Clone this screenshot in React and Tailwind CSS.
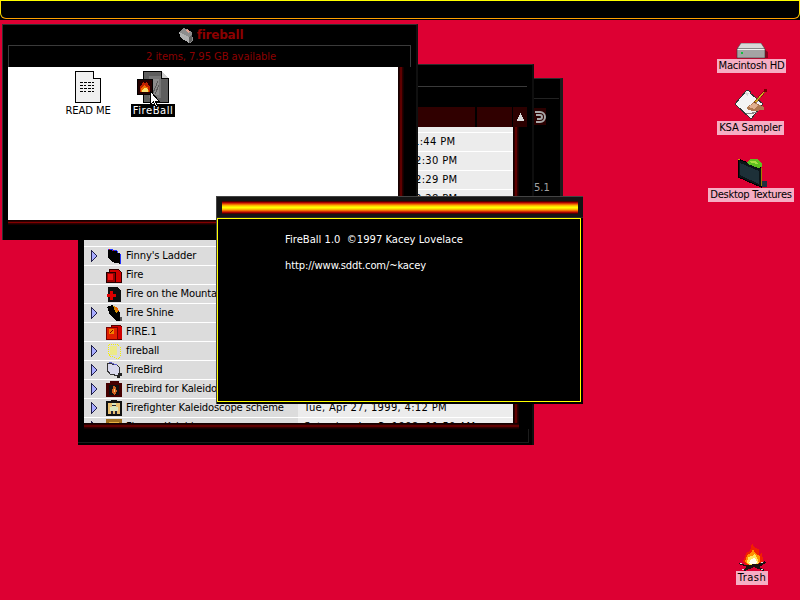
import React from "react";

const FONT = "font-['DejaVu_Sans',sans-serif] text-[10px] leading-[12px] whitespace-nowrap";

function Tri() {
  return (
    <svg width="8" height="14" viewBox="0 0 8 14" shapeRendering="crispEdges">
      <polygon points="1,1 7,7 1,13" fill="#a8acff" stroke="#20204a" strokeWidth="1" />
    </svg>
  );
}

function Ico({ children }) {
  return (
    <svg width="16" height="16" viewBox="0 0 16 16" shapeRendering="crispEdges" className="shrink-0">
      {children}
    </svg>
  );
}

const rowIcons = {
  finny: (
    <Ico>
      <path d="M2 1l9 2 1 2 3 1v10l-9-2-4-5z" fill="#000" />
      <path d="M2 1l9 2 1 2M14 6v10" stroke="#2030ff" fill="none" />
      <path d="M3 1l1 1M7 2l1 1" stroke="#e00000" />
    </Ico>
  ),
  fire: (
    <Ico>
      <path d="M3 2h9l3 3v10H3z" fill="#d00000" stroke="#300" />
      <path d="M0 5h9v10H0z" fill="#900" stroke="#200" />
      <path d="M2 7h5v6H2z" fill="#f01010" />
    </Ico>
  ),
  mountain: (
    <Ico>
      <path d="M2 1h9l4 4v11H2z" fill="#101010" />
      <path d="M4 5h3v3h3v3H7v3H4v-3H1V8h3z" fill="#e00000" />
    </Ico>
  ),
  shine: (
    <Ico>
      <path d="M1 2l5-2 3 2 5 6v8h-3L4 10z" fill="#000" />
      <path d="M7 1h2l3 5-2 2z" fill="#d09000" />
      <path d="M9 2h2l2 4h-2z" fill="#f06000" />
      <path d="M14 12h2v4h-2z" fill="#555" />
    </Ico>
  ),
  fire1: (
    <Ico>
      <path d="M5 1h9l2 2v12H5z" fill="#d00000" stroke="#500" />
      <path d="M0 3h11v12H0z" fill="#e02000" stroke="#700" />
      <path d="M3 5h5v5H3z" fill="#f08000" />
      <path d="M4 9l3-3" stroke="#700" />
    </Ico>
  ),
  fireball: (
    <Ico>
      <path d="M3 1h8l3 3v9l-2 3-8-3-2-5z" fill="none" stroke="#f4f000" strokeDasharray="1 1" strokeWidth="1" />
      <path d="M4 3h7v9H4z" fill="#f4f060" fillOpacity=".65" />
    </Ico>
  ),
  bird: (
    <Ico>
      <path d="M1 1l10 2 2 2v9l-9-2-3-4z" fill="#d8d8ec" stroke="#333" />
      <path d="M3 0l8 3" stroke="#6060d0" />
      <path d="M12 11h4v3h-2v2h-3z" fill="#222" />
    </Ico>
  ),
  kaleid: (
    <Ico>
      <path d="M0 2h4V0h9v2h3v14H0z" fill="#400" />
      <path d="M3 4h10v10H3z" fill="#111" />
      <path d="M7 5h2l2 5-2 4-3-2z" fill="#d06020" />
      <path d="M8 8h1v3H8z" fill="#f0d070" />
    </Ico>
  ),
  fighter: (
    <Ico>
      <path d="M0 1h5V0h6v1h5v15H0z" fill="#111" />
      <path d="M2 3h12v11H2z" fill="#e8c070" />
      <path d="M6 3h4v4H6zM4 7h8v4H4z" fill="#d8e8c0" />
      <path d="M5 11h2v3H5zM9 11h2v3H9zM6 5h4v1H6z" fill="#223" />
    </Ico>
  ),
  flame: (
    <Ico>
      <path d="M0 0h16v16H0z" fill="#a07020" />
      <path d="M3 3h10v10H3z" fill="#e8b040" />
    </Ico>
  ),
};

const timeRows = [
  [115, "1:44 PM"],
  [117, "2:30 PM"],
  [117, "2:29 PM"],
  [117, "2:28 PM"],
];

const nameRows = [
  { tri: true, icon: "finny", name: "Finny's Ladder" },
  { icon: "fire", name: "Fire" },
  { icon: "mountain", name: "Fire on the Mountain" },
  { tri: true, icon: "shine", name: "Fire Shine" },
  { icon: "fire1", name: "FIRE.1" },
  { tri: true, icon: "fireball", name: "fireball" },
  { tri: true, icon: "bird", name: "FireBird" },
  { tri: true, icon: "kaleid", name: "Firebird for Kaleidoscope" },
  { tri: true, icon: "fighter", name: "Firefighter Kaleidoscope scheme", date: "Tue, Apr 27, 1999, 4:12 PM" },
  { tri: true, icon: "flame", name: "Flames Kaleidoscope", date: "Saturday, Jan 3, 1998, 11:50 AM" },
];

function Row({ tri, icon, name, date, dateOffset = 6 }) {
  return (
    <div className="flex h-[19px] border-t border-white text-black">
      <div className="flex w-[214px] shrink-0 items-center overflow-hidden bg-[#dcdcdc]">
        <div className="flex w-[22px] shrink-0 justify-start pl-[6px]">{tri ? <Tri /> : null}</div>
        {icon ? rowIcons[icon] : null}
        <span className="ml-1 tracking-[-0.15px]">{name}</span>
      </div>
      <div className="flex flex-1 items-center overflow-hidden bg-[#ececec]">
        <span className="tracking-[0.3px]" style={{ marginLeft: dateOffset }}>{date}</span>
      </div>
    </div>
  );
}

function GenericFolder({ size = 16 }) {
  return (
    <svg width={size} height={size} viewBox="0 0 16 16" shapeRendering="crispEdges">
      <path d="M1 5l5-4 8 4 1 9-3 2-9-5z" fill="#8c8c8c" />
      <path d="M1 5l10 5v6l-8-5z" fill="#b0b0b0" />
      <path d="M9 2l3 2-1 2-3-2z" fill="#e0a090" />
      <path d="M11 10l3-3v7l-3 2z" fill="#606060" />
    </svg>
  );
}

function MiniFlame() {
  return (
    <svg width="16" height="16" viewBox="0 0 16 16" shapeRendering="crispEdges">
      <rect width="16" height="16" fill="#000" />
      <rect x="1" y="1" width="14" height="14" fill="#240000" />
      <path d="M3 13V7l2-1 1-3 2 2 2-3 1 4 2 1v6z" fill="#c02000" />
      <path d="M4 13V9l2-1 2-3 1 3 2 0 1 5z" fill="#f07000" />
      <path d="M5 13v-2l2-2 2 0 2 2v2z" fill="#f8e070" />
    </svg>
  );
}

function ReadMeIcon() {
  return (
    <svg width="26" height="32" viewBox="0 0 26 32" shapeRendering="crispEdges">
      <path d="M.5.5h18l7 7v24H.5z" fill="#f0f0f0" stroke="#000" />
      <path d="M18.5.5v7h7" fill="#fff" stroke="#000" />
      <path d="M5 11h14M5 14h6M13 14h6M5 17h14M5 20h6M13 20h6" stroke="#000" strokeDasharray="3 1" />
    </svg>
  );
}

function FireBallDoc() {
  return (
    <svg width="26" height="32" viewBox="0 0 26 32" shapeRendering="crispEdges">
      <path d="M.5.5h18l7 7v24H.5z" fill="#5e5e5e" stroke="#000" />
      <path d="M18.5.5v7h7" fill="#cfcfcf" stroke="#000" />
      <path d="M6 5h12v22H6z" fill="#767676" />
      <path d="M9 8h7v16H9z" fill="#8c8c8c" />
      <path d="M10 22l5-12M12 23l4-9" stroke="#5a5a5a" />
    </svg>
  );
}

function Cursor() {
  return (
    <svg width="11" height="17" viewBox="0 0 11 17" shapeRendering="crispEdges">
      <path d="M.5.5v13l3-3 2 5h2l-2-5h4z" fill="#fff" stroke="#000" />
    </svg>
  );
}

function HdIcon() {
  return (
    <svg width="32" height="16" viewBox="0 0 32 16">
      <path d="M28 6l4 3v6h-5z" fill="#8a001c" />
      <path d="M5 0h20l4 6H1z" fill="#d8d8d8" stroke="#444" strokeWidth=".6" />
      <path d="M1 6h28v9H1z" fill="#a4a4a4" stroke="#333" strokeWidth=".6" />
      <path d="M1.5 6.5h27" stroke="#f0f0f0" />
      <rect x="5" y="9" width="2" height="2" fill="#10c040" />
    </svg>
  );
}

function KsaIcon() {
  return (
    <svg width="33" height="32" viewBox="0 0 33 32" shapeRendering="crispEdges">
      <path d="M1 15L13 1l4 2-1 1 13 11-12 15z" fill="#f4f4f4" stroke="#333" />
      <path d="M11 3l4 1-1 3-3-2z" fill="#d8d8d8" />
      <path d="M12 19l8-6 6 3 4 2v3l-10 1-6-1z" fill="#b07850" />
      <path d="M14 18l6-4 4 2-4 4z" fill="#e0b090" />
      <path d="M20 13l8-9 3-3 1 1-10 12z" fill="#d8b020" stroke="#400" strokeWidth=".5" />
      <path d="M30 0h3v3h-3z" fill="#700" />
      <path d="M6 19l6 5 12-1-5 2H12z" fill="#888" />
    </svg>
  );
}

function TexturesIcon() {
  return (
    <svg width="30" height="32" viewBox="0 0 30 32" shapeRendering="crispEdges">
      <path d="M24 25h6v6h-5z" fill="#223040" />
      <path d="M1 3l23 9v19L1 21z" fill="#0c1418" stroke="#000" />
      <path d="M3 7l19 8v13L3 19z" fill="#1d3038" />
      <path d="M10 6l4-3h6l5 4v4l-4 1-10-4z" fill="#60c020" />
      <path d="M13 5h5l3 3-7-1z" fill="#a8e040" />
      <path d="M24 12v18" stroke="#a08000" />
      <path d="M1 3h2" stroke="#d0a000" />
    </svg>
  );
}

function TrashIcon() {
  return (
    <svg width="30" height="28" viewBox="0 0 30 28" shapeRendering="crispEdges">
      <path d="M6 18L10 9l3-1 2-8 3 5 4 1v6l3-3 1 9-4 4H9z" fill="#f02000" />
      <path d="M8 19l2-7 4-2 2-4 3 5 2 1 2 1 0 6-4 2H10z" fill="#ff9000" />
      <path d="M10 20l1-6 4-1 3-2 2 4 2 5-3 2h-7z" fill="#ffe860" />
      <path d="M12 20l2-4 4-1 2 4-2 2h-4z" fill="#fffff0" />
      <path d="M2 20l7 2 12-1 7-3 1 2-7 4 6 3-2 1-9-4-9 4-2-1 4-3-8-3z" fill="#1c1010" />
      <path d="M3 20h2M24 19h2M5 26h2M24 26h2" stroke="#e0e0e0" />
    </svg>
  );
}

function DesktopIcon({ pos, label, children, iconClass, track }) {
  return (
    <div className={`absolute flex flex-col items-center ${pos}`}>
      <div className={`flex justify-center ${iconClass}`}>{children}</div>
      <div className={`h-[14px] w-full bg-[#f6aec4] text-center leading-[14px] text-black ${track}`}>{label}</div>
    </div>
  );
}

const channelX = "bg-[linear-gradient(90deg,#0a0000,#300000_30%,#800000_50%,#300000_70%,#0a0000)]";
const channelY = "bg-[linear-gradient(#0a0000,#300000_30%,#800000_50%,#300000_70%,#0a0000)]";

export default function App() {
  return (
    <div className={`relative h-[600px] w-[800px] overflow-hidden bg-[#dd0033] ${FONT}`}>
      {/* menu bar */}
      <div className="h-[20px] bg-black">
        <div className="h-[19px] rounded-b-[6px] border-x border-t border-b border-x-[#ffe000] border-t-[#ffff00] border-b-[#ffa000] bg-black" />
      </div>

      {/* back window */}
      <div className="absolute left-[480px] top-[78px] flex h-[260px] w-[83px] flex-col border-t border-r-[3px] border-t-[#2c2c2c] border-r-[#1c1c1c] bg-black text-[#a0a0a0]">
        <div className="mt-[19px] mr-[1px] h-px bg-[#222222]" />
        <div className="mt-[9px] ml-[54px] flex h-[17px] w-[12px] items-center justify-center bg-[#2a0000]">
          <svg width="12" height="14" viewBox="0 0 12 14">
            <path d="M1 2h5a5 5 0 0 1 0 10H2M2 5h4a2 2 0 0 1 0 4H3" fill="none" stroke="#a8a8a8" strokeWidth="2" />
          </svg>
        </div>
        <div className="mt-[57px] ml-[54px]">5.1</div>
      </div>

      {/* list window */}
      <div className="absolute left-[78px] top-[64px] flex h-[381px] w-[456px] flex-col border-t border-r-2 border-t-[#2c2c2c] border-r-[#0e0e0e] bg-black">
        <div className="h-[21px] shrink-0" />
        <div className="ml-[6px] mr-[5px] h-[21px] shrink-0 border-t border-l border-[#3a3a3a]" />
        <div className="ml-[6px] mr-[5px] flex h-[20px] shrink-0 gap-px">
          <div className="flex flex-1 gap-[2px] bg-black">
            <div className="flex-1 bg-[#300000]" />
            <div className="w-[35px] bg-[#300000]" />
          </div>
          <div className="flex w-[14px] items-center justify-center bg-[#2c0000]">
            <svg width="9" height="8" viewBox="0 0 9 8" shapeRendering="crispEdges">
              <path d="M4 0h1v2H4zM3 2h3v2H3zM2 4h5v2H2zM1 6h7v2H1z" fill="#d8d8d8" />
            </svg>
          </div>
        </div>
        <div className="ml-[6px] flex h-[296px] shrink-0">
          <div className="w-[429px] overflow-hidden bg-[#ececec]">
            <div className="h-[5px] bg-[#ececec]" />
            {timeRows.map(([off, t]) => (
              <Row key={t} date={t} dateOffset={off} />
            ))}
            <Row />
            <Row />
            {nameRows.map((r) => (
              <Row key={r.name} {...r} />
            ))}
          </div>
          <div className={`w-[6px] ${channelX}`} />
        </div>
        <div className={`ml-[6px] h-[6px] w-[435px] shrink-0 ${channelY}`} />
        <div className="mb-[2px] mr-[3px] flex-1 border-r border-b border-[#1c1c1c]" />
      </div>

      {/* fireball window */}
      <div className="absolute left-[2px] top-[24px] flex h-[216px] w-[416px] flex-col border-t border-l border-r-2 border-t-[#303030] border-l-[#303030] border-r-[#101010] bg-black">
        <div className="flex h-[20px] shrink-0 items-center justify-center gap-[3px] pl-[2px] font-bold text-[#8c0000]">
          <GenericFolder />
          <span className="text-[12px] leading-[14px] tracking-[-0.2px]">fireball</span>
        </div>
        <div className="ml-[5px] mr-[5px] flex h-[22px] shrink-0 items-center justify-center border-t border-l border-r border-[#3a3a3a] pl-[3px] tracking-[-0.08px] text-[#8c0000]">
          2 items, 7.95 GB available
        </div>
        <div className="ml-[5px] flex h-[153px] shrink-0">
          <div className="relative w-[390px] bg-white text-black">
            <div className="absolute left-[58px] top-[4px] flex w-[44px] flex-col items-center">
              <ReadMeIcon />
              <span className="mt-[1px] leading-[14px] tracking-[-0.1px]">READ ME</span>
            </div>
            <div className="absolute left-[123px] top-[4px] flex w-[44px] flex-col items-center">
              <div className="pl-[5px]">
                <FireBallDoc />
              </div>
              <span className="mt-[1px] h-[13px] w-full bg-black text-center leading-[13px] tracking-[0.5px] text-white">FireBall</span>
            </div>
            <div className="absolute left-[129px] top-[12px]">
              <MiniFlame />
            </div>
            <div className="absolute left-[142px] top-[24px]">
              <Cursor />
            </div>
          </div>
          <div className={`w-[6px] ${channelX}`} />
        </div>
        <div className={`ml-[5px] h-[5px] w-[396px] shrink-0 ${channelY}`} />
      </div>

      {/* about window */}
      <div className="absolute left-[216px] top-[196px] flex h-[208px] w-[367px] flex-col border-t border-l border-t-[#444444] border-l-[#444444] bg-black">
        <div className="flex h-[21px] shrink-0 items-start border-b border-[#2a2a2a] bg-[#141414] px-[5px] pt-[4px]">
          <div className="h-[13px] flex-1 bg-[linear-gradient(#200000,#b00000,#f06000,#ffd000,#ffff00_50%,#ffd000,#f06000,#b00000,#200000)]" />
        </div>
        <div className="mb-[2px] mr-[2px] flex-1 border border-[#ffff00] pl-[67px] pt-[15px] text-white">
          <div className="h-[26px]">FireBall 1.0&nbsp; ©1997 Kacey Lovelace</div>
          <div className="tracking-[-0.15px]">http://www.sddt.com/~kacey</div>
        </div>
      </div>

      {/* desktop icons */}
      <DesktopIcon pos="left-[717px] top-[43px] w-[69px]" label="Macintosh HD" iconClass="h-[16px] pl-[1px]" track="tracking-[-0.3px]">
        <HdIcon />
      </DesktopIcon>
      <DesktopIcon pos="left-[717px] top-[89px] w-[67px]" label="KSA Sampler" iconClass="h-[32px]" track="tracking-[-0.2px]">
        <KsaIcon />
      </DesktopIcon>
      <DesktopIcon pos="left-[708px] top-[156px] w-[86px]" label="Desktop Textures" iconClass="h-[32px] pl-[2px]" track="tracking-[-0.3px]">
        <TexturesIcon />
      </DesktopIcon>
      <DesktopIcon pos="left-[736px] top-[543px] w-[32px]" label="Trash" iconClass="h-[28px]" track="tracking-[0.4px]">
        <TrashIcon />
      </DesktopIcon>
    </div>
  );
}
